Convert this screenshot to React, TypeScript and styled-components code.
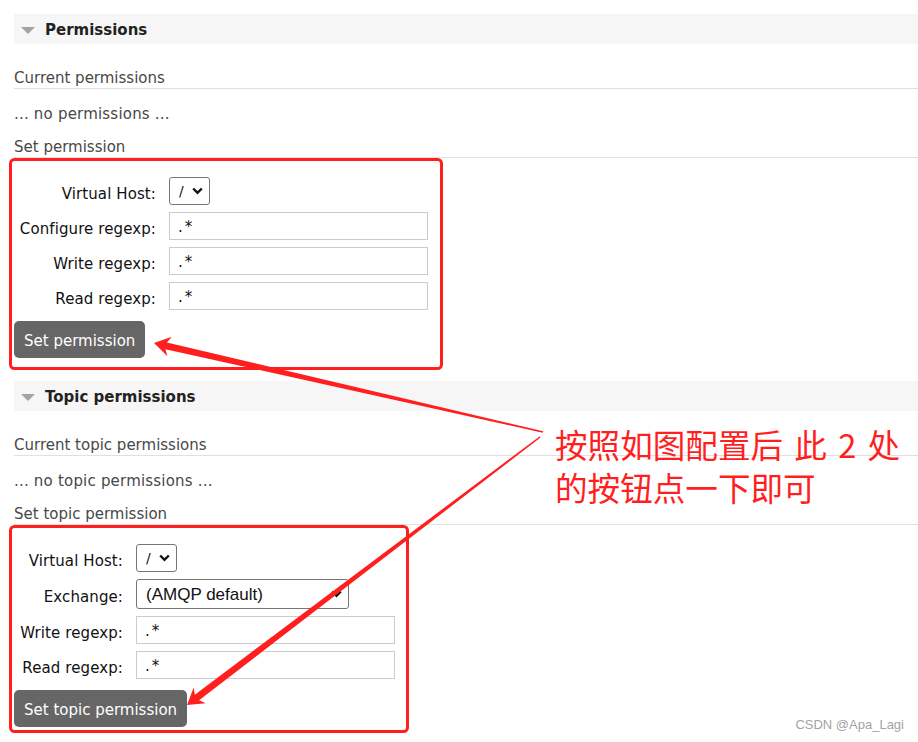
import React from "react";
import styled, { createGlobalStyle } from "styled-components";

const GlobalStyle = createGlobalStyle`
  html, body {
    margin: 0;
    padding: 0;
    background: #ffffff;
  }
  body {
    font-family: "DejaVu Sans", Verdana, sans-serif;
    font-size: 15px;
    color: #484848;
  }
  * { box-sizing: border-box; }
`;

const Page = styled.div`
  position: relative;
  width: 918px;
  height: 742px;
  overflow: hidden;
  padding: 14px 0 0 14px;
`;

const Section = styled.section<{ $gap?: number }>`
  display: flex;
  flex-direction: column;
  align-items: flex-start;
  margin-top: ${(p) => p.$gap ?? 0}px;
`;

const SectionHeader = styled.div`
  align-self: stretch;
  display: flex;
  align-items: center;
  height: 30px;
  padding-left: 7px;
  background: #f6f6f6;
`;

const Caret = styled.span`
  width: 0;
  height: 0;
  border-left: 7px solid transparent;
  border-right: 7px solid transparent;
  border-top: 7px solid #a3a3a3;
  margin-right: 10px;
  margin-top: 2px;
`;

const SectionTitle = styled.h2`
  margin: 0;
  padding-top: 2px;
  font-size: 15px;
  font-weight: bold;
  color: #222;
`;

const SubHeading = styled.h3<{ $top: number }>`
  align-self: stretch;
  margin: ${(p) => p.$top}px 0 0 0;
  font-size: 15px;
  font-weight: normal;
  line-height: 18px;
  padding: 1px 0 1px 0;
  border-bottom: 1px solid #e0e0e0;
  color: #484848;
`;

const Note = styled.p`
  margin: 15px 0 0 0;
  padding-top: 1px;
  line-height: 18px;
  letter-spacing: 0.2px;
  color: #484848;
`;

const Form = styled.div<{ $labelWidth: number }>`
  display: grid;
  grid-template-columns: ${(p) => p.$labelWidth}px auto;
  align-items: center;
  row-gap: 7px;
  margin-top: 19px;
`;

const Label = styled.label`
  display: flex;
  align-items: center;
  justify-content: flex-end;
  padding: 5px 13px 0 0;
  height: 28px;
  color: #111;
  white-space: nowrap;
  letter-spacing: 0.1px;
`;

const TextInput = styled.input<{ $width: number }>`
  width: ${(p) => p.$width}px;
  height: 28px;
  border: 1px solid #cccccc;
  border-radius: 0;
  padding: 1px 7px 0 8px;
  font-family: "DejaVu Sans", Verdana, sans-serif;
  font-size: 15px;
  letter-spacing: 2px;
  color: #111;
  background: #fff;
  outline: none;
`;

const SelectWrap = styled.div<{ $width: number; $height: number }>`
  position: relative;
  width: ${(p) => p.$width}px;
  height: ${(p) => p.$height}px;
`;

const Select = styled.select<{ $wide?: boolean }>`
  appearance: none;
  -webkit-appearance: none;
  width: 100%;
  height: 100%;
  border: 1px solid #767676;
  border-radius: 3px;
  background: #fff;
  padding: 0 0 0 9px;
  font-family: ${(p) =>
    p.$wide ? '"Liberation Sans", Arial, sans-serif' : '"DejaVu Sans", Verdana, sans-serif'};
  font-size: ${(p) => (p.$wide ? 17 : 14)}px;
  color: #111;
  outline: none;
`;

const Chevron = styled.svg`
  position: absolute;
  right: 7px;
  top: 50%;
  margin-top: -4px;
  width: 11px;
  height: 8px;
  pointer-events: none;
`;

const Button = styled.button<{ $top: number }>`
  margin-top: ${(p) => p.$top}px;
  height: 37px;
  padding: 2px 10px 0 10px;
  border: none;
  border-radius: 5px;
  background: #666666;
  color: #ffffff;
  font-family: "DejaVu Sans", Verdana, sans-serif;
  font-size: 15px;
  cursor: pointer;
`;

const Overlay = styled.svg`
  position: absolute;
  left: 0;
  top: 0;
  width: 918px;
  height: 742px;
  pointer-events: none;
`;

const Callout = styled.div`
  position: absolute;
  left: 555px;
  top: 422px;
  font-family: "Noto Sans CJK SC", "Noto Sans", sans-serif;
  font-size: 32.6px;
  line-height: 43px;
  word-spacing: 4px;
  color: #ff1f1f;
  white-space: pre;
`;

const Watermark = styled.div`
  position: absolute;
  right: 14px;
  top: 717px;
  font-family: "Liberation Sans", Arial, sans-serif;
  font-size: 13px;
  color: #a3a3a3;
`;

const ANNOTATION_RED = "#ff1f1f";

type Pt = [number, number];

// Tapered arrow: thin at the tail, widening to a swept-back head at the tip.
function arrowPoints(tail: Pt, tip: Pt, headLen = 16, headHalf = 10, shaft = 7, tailW = 1.5) {
  const dx = tail[0] - tip[0];
  const dy = tail[1] - tip[1];
  const len = Math.hypot(dx, dy);
  const ux = dx / len;
  const uy = dy / len;
  const nx = -uy;
  const ny = ux;
  const at = (along: number, side: number): string =>
    `${(tip[0] + ux * along + nx * side).toFixed(1)},${(tip[1] + uy * along + ny * side).toFixed(1)}`;
  const tailPt = (side: number): string =>
    `${(tail[0] + nx * side).toFixed(1)},${(tail[1] + ny * side).toFixed(1)}`;
  return [
    `${tip[0]},${tip[1]}`,
    at(headLen, headHalf),
    at(headLen * 0.78, shaft / 2),
    tailPt(tailW / 2),
    tailPt(-tailW / 2),
    at(headLen * 0.78, -shaft / 2),
    at(headLen, -headHalf),
  ].join(" ");
}

const ChevronIcon = () => (
  <Chevron viewBox="0 0 11 8">
    <polyline points="1.2,1.5 5.5,5.8 9.8,1.5" fill="none" stroke="#111" strokeWidth="2.4" />
  </Chevron>
);

type Field = { label: string; kind: "vhost" | "exchange" | "regexp" };

const FormBlock = ({
  fields,
  labelWidth,
  inputWidth,
}: {
  fields: Field[];
  labelWidth: number;
  inputWidth: number;
}) => (
  <Form $labelWidth={labelWidth}>
    {fields.map((f) => (
      <React.Fragment key={f.label}>
        <Label>{f.label}</Label>
        {f.kind === "vhost" && (
          <SelectWrap $width={41} $height={28}>
            <Select defaultValue="/">
              <option value="/">/</option>
            </Select>
            <ChevronIcon />
          </SelectWrap>
        )}
        {f.kind === "exchange" && (
          <SelectWrap $width={213} $height={30}>
            <Select $wide defaultValue="">
              <option value="">(AMQP default)</option>
            </Select>
            <ChevronIcon />
          </SelectWrap>
        )}
        {f.kind === "regexp" && <TextInput $width={inputWidth} defaultValue=".*" />}
      </React.Fragment>
    ))}
  </Form>
);

export default function App() {
  return (
    <>
      <GlobalStyle />
      <Page>
        <Section>
          <SectionHeader>
            <Caret />
            <SectionTitle>Permissions</SectionTitle>
          </SectionHeader>
          <SubHeading $top={24}>Current permissions</SubHeading>
          <Note>... no permissions ...</Note>
          <SubHeading $top={14}>Set permission</SubHeading>
          <FormBlock
            labelWidth={155}
            inputWidth={259}
            fields={[
              { label: "Virtual Host:", kind: "vhost" },
              { label: "Configure regexp:", kind: "regexp" },
              { label: "Write regexp:", kind: "regexp" },
              { label: "Read regexp:", kind: "regexp" },
            ]}
          />
          <Button $top={11}>Set permission</Button>
        </Section>

        <Section $gap={23}>
          <SectionHeader>
            <Caret />
            <SectionTitle>Topic permissions</SectionTitle>
          </SectionHeader>
          <SubHeading $top={24}>Current topic permissions</SubHeading>
          <Note>... no topic permissions ...</Note>
          <SubHeading $top={14}>Set topic permission</SubHeading>
          <FormBlock
            labelWidth={122}
            inputWidth={259}
            fields={[
              { label: "Virtual Host:", kind: "vhost" },
              { label: "Exchange:", kind: "exchange" },
              { label: "Write regexp:", kind: "regexp" },
              { label: "Read regexp:", kind: "regexp" },
            ]}
          />
          <Button $top={11}>Set topic permission</Button>
        </Section>

        <Overlay viewBox="0 0 918 742">
          <rect x="10.5" y="159.5" width="431" height="209" rx="4" fill="none" stroke={ANNOTATION_RED} strokeWidth="3" />
          <rect x="10.5" y="526.5" width="397" height="205" rx="4" fill="none" stroke={ANNOTATION_RED} strokeWidth="3" />
          <polygon points={arrowPoints([543, 432], [154, 343])} fill={ANNOTATION_RED} />
          <polygon points={arrowPoints([540, 437], [187, 705])} fill={ANNOTATION_RED} />
        </Overlay>

        <Callout>{"按照如图配置后 此 2 处\n的按钮点一下即可"}</Callout>
        <Watermark>CSDN @Apa_Lagi</Watermark>
      </Page>
    </>
  );
}
